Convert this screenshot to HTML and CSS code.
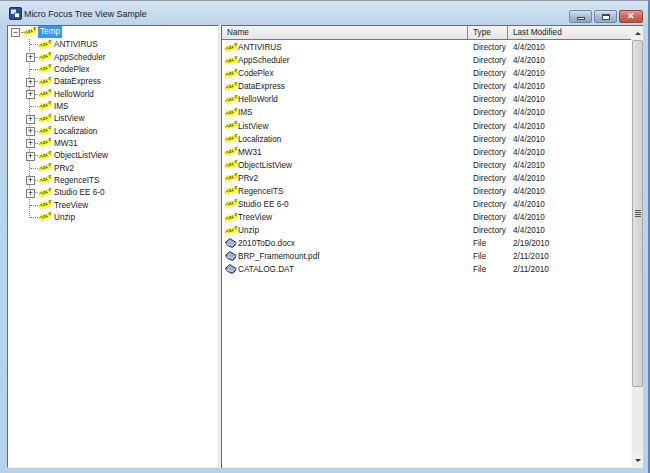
FILE: index.html
```html
<!DOCTYPE html>
<html lang="en">
<head>
<meta charset="utf-8">
<title>Micro Focus Tree View Sample</title>
<link rel="stylesheet" href="styles.css">
</head>
<body>
<svg class="defs" width="0" height="0" aria-hidden="true">
  <symbol id="folder" viewBox="0 0 14 10">
    <path d="M0.3 6.5 3 3 8 3 13.7 0.3 13.7 5 10.5 8 7 8.3 2 9.7Z" fill="#ffff28"/>
    <path d="M1.5 7.5 3.5 5 4.5 7.5M5 5 7 4.5 5.5 6.5 7.5 6.5M8.5 3.5 8 6 10 5.5M10.5 2 12.8 1.5 11 3.5 12.8 4" fill="none" stroke="#5c5c28" stroke-width=".8"/>
  </symbol>
  <symbol id="file" viewBox="0 0 14 12">
    <path d="M0.7 5 5.5 0.7 13.3 5.5 8.5 10.3Z" fill="#9db2d8" stroke="#1f2e52" stroke-width="1.2"/>
    <path d="M0.7 5 Q1 8 3.5 9.2 L8.7 11.4 13 7.5" fill="none" stroke="#1f2e52" stroke-width="1.2"/>
    <path d="M1.8 6 8.5 9.4 12.2 6" fill="none" stroke="#fff" stroke-width="1"/>
  </symbol>
</svg>
<div class="window">
  <header class="titlebar">
    <svg class="appicon" viewBox="0 0 13 13" aria-hidden="true">
      <rect x=".5" y=".5" width="12" height="12" rx="1.5" fill="#2b4f97" stroke="#1c2f66"/>
      <rect x="2" y="2.5" width="5" height="4.5" fill="#dfe8f6"/>
      <rect x="5.5" y="6" width="5" height="4.5" fill="#fff" stroke="#16264f" stroke-width=".6"/>
    </svg>
    <span class="title">Micro Focus Tree View Sample</span>
    <div class="controls">
      <div class="ctl ctl-min"><span class="glyph-min"></span></div>
      <div class="ctl ctl-max"><span class="glyph-max"></span></div>
      <div class="ctl ctl-close"><span class="glyph-close">✕</span></div>
    </div>
  </header>
  <main class="client">
    <section class="tree">
      <div class="row root"><span class="box">−</span><span class="hline root-line"></span><svg class="ficon"><use href="#folder"/></svg><span class="label selected">Temp</span></div>
      <div class="children">
        <div class="row"><span class="hline"></span><svg class="ficon"><use href="#folder"/></svg><span class="label">ANTIVIRUS</span></div>
        <div class="row"><span class="box child">+</span><span class="hline"></span><svg class="ficon"><use href="#folder"/></svg><span class="label">AppScheduler</span></div>
        <div class="row"><span class="hline"></span><svg class="ficon"><use href="#folder"/></svg><span class="label">CodePlex</span></div>
        <div class="row"><span class="box child">+</span><span class="hline"></span><svg class="ficon"><use href="#folder"/></svg><span class="label">DataExpress</span></div>
        <div class="row"><span class="box child">+</span><span class="hline"></span><svg class="ficon"><use href="#folder"/></svg><span class="label">HelloWorld</span></div>
        <div class="row"><span class="hline"></span><svg class="ficon"><use href="#folder"/></svg><span class="label">IMS</span></div>
        <div class="row"><span class="box child">+</span><span class="hline"></span><svg class="ficon"><use href="#folder"/></svg><span class="label">ListView</span></div>
        <div class="row"><span class="box child">+</span><span class="hline"></span><svg class="ficon"><use href="#folder"/></svg><span class="label">Localization</span></div>
        <div class="row"><span class="box child">+</span><span class="hline"></span><svg class="ficon"><use href="#folder"/></svg><span class="label">MW31</span></div>
        <div class="row"><span class="box child">+</span><span class="hline"></span><svg class="ficon"><use href="#folder"/></svg><span class="label">ObjectListView</span></div>
        <div class="row"><span class="hline"></span><svg class="ficon"><use href="#folder"/></svg><span class="label">PRv2</span></div>
        <div class="row"><span class="box child">+</span><span class="hline"></span><svg class="ficon"><use href="#folder"/></svg><span class="label">RegenceITS</span></div>
        <div class="row"><span class="box child">+</span><span class="hline"></span><svg class="ficon"><use href="#folder"/></svg><span class="label">Studio EE 6-0</span></div>
        <div class="row"><span class="hline"></span><svg class="ficon"><use href="#folder"/></svg><span class="label">TreeView</span></div>
        <div class="row last"><span class="hline"></span><svg class="ficon"><use href="#folder"/></svg><span class="label">Unzip</span></div>
      </div>
    </section>
    <div class="splitter"></div>
    <section class="list">
      <div class="list-main">
        <div class="header">
          <div class="hcell c-name">Name</div>
          <div class="hcell c-type">Type</div>
          <div class="hcell c-date">Last Modified</div>
        </div>
        <div class="rows">
          <div class="lrow"><span class="c-name cell"><svg class="ficon"><use href="#folder"/></svg>ANTIVIRUS</span><span class="c-type">Directory</span><span class="c-date">4/4/2010</span></div>
          <div class="lrow"><span class="c-name cell"><svg class="ficon"><use href="#folder"/></svg>AppScheduler</span><span class="c-type">Directory</span><span class="c-date">4/4/2010</span></div>
          <div class="lrow"><span class="c-name cell"><svg class="ficon"><use href="#folder"/></svg>CodePlex</span><span class="c-type">Directory</span><span class="c-date">4/4/2010</span></div>
          <div class="lrow"><span class="c-name cell"><svg class="ficon"><use href="#folder"/></svg>DataExpress</span><span class="c-type">Directory</span><span class="c-date">4/4/2010</span></div>
          <div class="lrow"><span class="c-name cell"><svg class="ficon"><use href="#folder"/></svg>HelloWorld</span><span class="c-type">Directory</span><span class="c-date">4/4/2010</span></div>
          <div class="lrow"><span class="c-name cell"><svg class="ficon"><use href="#folder"/></svg>IMS</span><span class="c-type">Directory</span><span class="c-date">4/4/2010</span></div>
          <div class="lrow"><span class="c-name cell"><svg class="ficon"><use href="#folder"/></svg>ListView</span><span class="c-type">Directory</span><span class="c-date">4/4/2010</span></div>
          <div class="lrow"><span class="c-name cell"><svg class="ficon"><use href="#folder"/></svg>Localization</span><span class="c-type">Directory</span><span class="c-date">4/4/2010</span></div>
          <div class="lrow"><span class="c-name cell"><svg class="ficon"><use href="#folder"/></svg>MW31</span><span class="c-type">Directory</span><span class="c-date">4/4/2010</span></div>
          <div class="lrow"><span class="c-name cell"><svg class="ficon"><use href="#folder"/></svg>ObjectListView</span><span class="c-type">Directory</span><span class="c-date">4/4/2010</span></div>
          <div class="lrow"><span class="c-name cell"><svg class="ficon"><use href="#folder"/></svg>PRv2</span><span class="c-type">Directory</span><span class="c-date">4/4/2010</span></div>
          <div class="lrow"><span class="c-name cell"><svg class="ficon"><use href="#folder"/></svg>RegenceITS</span><span class="c-type">Directory</span><span class="c-date">4/4/2010</span></div>
          <div class="lrow"><span class="c-name cell"><svg class="ficon"><use href="#folder"/></svg>Studio EE 6-0</span><span class="c-type">Directory</span><span class="c-date">4/4/2010</span></div>
          <div class="lrow"><span class="c-name cell"><svg class="ficon"><use href="#folder"/></svg>TreeView</span><span class="c-type">Directory</span><span class="c-date">4/4/2010</span></div>
          <div class="lrow"><span class="c-name cell"><svg class="ficon"><use href="#folder"/></svg>Unzip</span><span class="c-type">Directory</span><span class="c-date">4/4/2010</span></div>
          <div class="lrow"><span class="c-name cell"><svg class="ficon"><use href="#file"/></svg>2010ToDo.docx</span><span class="c-type">File</span><span class="c-date">2/19/2010</span></div>
          <div class="lrow"><span class="c-name cell"><svg class="ficon"><use href="#file"/></svg>BRP_Framemount.pdf</span><span class="c-type">File</span><span class="c-date">2/11/2010</span></div>
          <div class="lrow"><span class="c-name cell"><svg class="ficon"><use href="#file"/></svg>CATALOG.DAT</span><span class="c-type">File</span><span class="c-date">2/11/2010</span></div>
        </div>
      </div>
      <div class="scrollbar">
        <div class="sbtn"><span class="arrow-up"></span></div>
        <div class="sthumb"><span class="grip"></span><span class="grip"></span><span class="grip"></span><span class="grip"></span></div>
        <div class="strack"></div>
        <div class="sbtn"><span class="arrow-down"></span></div>
      </div>
    </section>
  </main>
</div>
</body>
</html>
```
FILE: styles.css
```css
* { box-sizing: border-box; }
html, body { margin: 0; padding: 0; }
body {
  width: 650px;
  height: 473px;
  overflow: hidden;
  font-family: "Liberation Sans", Arial, sans-serif;
  font-size: 8.2px;
  color: #222;
  background: #fff;
}
.defs { position: absolute; }
.window {
  width: 650px;
  height: 473px;
  display: flex;
  flex-direction: column;
  background: linear-gradient(180deg, #d6e3f1 0, #bcd4ec 24px, #b8d2ec 100%);
  border-right: 2px solid #4f8fb8;
  border-top: 1px solid #8a9aa8;
}
.titlebar {
  height: 24px;
  flex: none;
  display: flex;
  align-items: center;
  padding: 1px 5px 0 9px;
}
.appicon { width: 13px; height: 13px; margin-right: 2px; }
.title { font-size: 8.9px; color: #222; }
.controls { margin-left: auto; display: flex; gap: 2px; align-self: flex-start; margin-top: 8px; }
.ctl {
  width: 24px;
  height: 13px;
  border: 1px solid #76889c;
  border-radius: 2px;
  display: flex;
  align-items: center;
  justify-content: center;
  background: linear-gradient(180deg, #d5e2ef 0, #a9bfd6 50%, #8fa9c4 100%);
}
.ctl-close {
  border-color: #8a4a40;
  background: linear-gradient(180deg, #e29a8a 0, #cc6a58 50%, #b9543f 100%);
}
.ctl-min, .ctl-max { width: 23px; }
.glyph-min { width: 8px; height: 3px; margin-top: 3px; background: #fff; border: 1px solid #445; }
.glyph-max { width: 8px; height: 6px; background: #fff; border: 1px solid #445; border-top-width: 2px; }
.glyph-close { color: #fff; font-size: 9px; font-weight: bold; line-height: 1; }
.client {
  flex: 1;
  min-height: 0;
  display: flex;
  padding: 0 5px 5px 7px;
}
.tree {
  width: 212px;
  flex: none;
  background: #fff;
  border-left: 1px solid #6b6b6b;
  border-top: 1px solid #6b6b6b;
  border-bottom: 1px solid #eee;
  border-right: 1px solid #ddd;
}
.splitter { width: 3px; flex: none; background: #f0f0f0; border-right: 1px solid #666; }
.row {
  position: relative;
  height: 12.35px;
  display: flex;
  align-items: center;
  white-space: nowrap;
}
.root { height: 12.5px; padding-left: 13px; }
.children {
  margin-left: 21px;
  border-left: 1px dotted #888;
  height: 179px;
}
.hline { width: 8px; flex: none; border-top: 1px dotted #888; }
.root-line { width: 2px; }
.ficon { width: 14px; height: 10px; flex: none; margin-top: -2px; }
.label { margin-left: 1px; padding: 0 1px; line-height: 11px; }
.selected { background: #3a97f0; color: #fff; margin-left: 1px; padding: 0 2px; height: 12px; line-height: 12px; }
.box {
  position: absolute;
  top: 2px;
  width: 9px;
  height: 9px;
  border: 1px solid #808080;
  background: #fff;
  font-size: 9px;
  line-height: 6px;
  text-align: center;
  color: #111;
}
.root .box { left: 3px; }
.box.child { left: -4px; top: 2px; }
.list { flex: 1; min-width: 0; display: flex; background: #fff; border-top: 1px solid #6b6b6b; border-bottom: 1px solid #eee; }
.list-main { flex: 1; min-width: 0; display: flex; flex-direction: column; }
.header {
  height: 14px;
  flex: none;
  display: flex;
  background: linear-gradient(180deg, #f4f4f4, #e6e6e6);
  border-bottom: 1px solid #777;
}
.hcell { display: flex; align-items: center; padding-left: 5px; border-right: 1px solid #888; }
.c-name { width: 246px; flex: none; }
.c-type { width: 40px; flex: none; }
.c-date { flex: 1; }
.header .c-date { border-right: 0; }
.rows { padding-top: 1px; }
.lrow { height: 13.08px; display: flex; align-items: center; white-space: nowrap; }
.lrow .c-type { padding-left: 5px; }
.lrow .c-date { padding-left: 5px; }
.cell { display: flex; align-items: center; padding-left: 2px; }
.cell .ficon { margin-right: 0; }
.scrollbar {
  width: 12px;
  flex: none;
  display: flex;
  flex-direction: column;
  background: #ebebeb;
  border-left: 1px solid #f5f5f5;
}
.sbtn { height: 14px; flex: none; display: flex; align-items: center; justify-content: center; background: #f0f0f0; }
.arrow-up { border: 3px solid transparent; border-top: 0; border-bottom: 3px solid #333; }
.arrow-down { border: 3px solid transparent; border-bottom: 0; border-top: 3px solid #333; }
.sthumb {
  height: 347px;
  flex: none;
  display: flex;
  flex-direction: column;
  align-items: center;
  justify-content: center;
  gap: 1px;
  background: linear-gradient(90deg, #e2e2e2, #cfcfd6);
  border: 1px solid #aaa;
  border-radius: 2px;
}
.grip { width: 6px; height: 1px; background: #555; }
.strack { flex: 1; }
```
